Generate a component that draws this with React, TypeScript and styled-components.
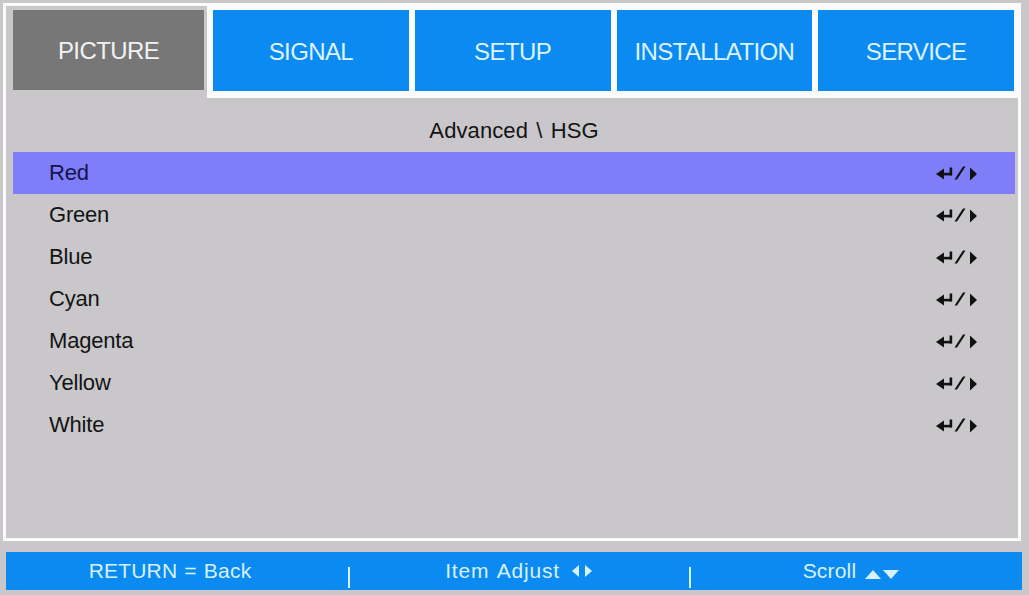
import styled, { createGlobalStyle } from "styled-components";

const GlobalStyle = createGlobalStyle`
    html, body {
        margin: 0;
        padding: 0;
        background: #c9c7ca;
        font-family: "Liberation Sans", Arial, sans-serif;
    }
`;

const Screen = styled.div`
    width: 1029px;
    height: 595px;
    overflow: hidden;
    background: #c9c7ca;
    padding-top: 3px;
    box-sizing: border-box;
`;

const Frame = styled.div`
    margin-left: 3px;
    width: 1018px;
    height: 538px;
    box-sizing: border-box;
    border: 3px solid #fbfbfb;
    background: #c9c7ca;
    display: flex;
    flex-direction: column;
`;

const TabBar = styled.div`
    display: flex;
    height: 92px;
    background: #fbfbfb;
    padding-right: 4px;
`;

const TabCell = styled.div<{ $active?: boolean }>`
    display: flex;
    box-sizing: border-box;
    padding: 4px 0 ${(p) => (p.$active ? "8px" : "7px")} ${(p) => (p.$active ? "7px" : "6px")};
    padding-right: ${(p) => (p.$active ? "3px" : "0")};
    background: ${(p) => (p.$active ? "#c9c7ca" : "transparent")};
    width: ${(p) => (p.$active ? "201px" : "auto")};
    flex: ${(p) => (p.$active ? "none" : "1")};
`;

const TabFace = styled.div<{ $active?: boolean }>`
    flex: 1;
    display: flex;
    align-items: center;
    justify-content: center;
    padding-top: 2px;
    background: ${(p) => (p.$active ? "#777777" : "#0b8bf1")};
    color: ${(p) => (p.$active ? "#f2f2f2" : "#def3ff")};
    font-size: 24px;
    letter-spacing: -0.6px;
`;

const Content = styled.div`
    flex: 1;
    padding: 0 3px 0 7px;
`;

const Crumb = styled.div`
    height: 54px;
    box-sizing: border-box;
    padding-top: 21px;
    text-align: center;
    font-size: 22px;
    line-height: 24px;
    color: #141414;
    letter-spacing: 0.1px;
    word-spacing: 2px;
`;

const Row = styled.div<{ $selected?: boolean }>`
    height: 42px;
    display: flex;
    align-items: center;
    justify-content: space-between;
    padding: 0 37px 0 36px;
    background: ${(p) => (p.$selected ? "#7f7ef8" : "transparent")};
    color: ${(p) => (p.$selected ? "#15154a" : "#141414")};
    font-size: 22px;
    letter-spacing: -0.2px;
`;

const Footer = styled.div`
    margin: 11px 0 0 6px;
    width: 1016px;
    height: 38px;
    background: #0b8bf1;
    color: #d8f1ff;
    display: grid;
    grid-template-columns: 328px 30px 311px 30px 1fr;
    align-items: center;
    font-size: 21px;
    letter-spacing: 0.2px;
`;

const FooterItem = styled.div<{ $shift?: number; $wide?: boolean }>`
    display: flex;
    align-items: center;
    justify-content: center;
    gap: ${(p) => (p.$wide ? 10 : 8)}px;
    word-spacing: ${(p) => (p.$wide ? 2 : 1)}px;
    letter-spacing: ${(p) => (p.$wide ? 0.8 : 0.2)}px;
    padding-right: ${(p) => p.$shift ?? 0}px;
`;

const Divider = styled.div`
    justify-self: center;
    width: 2px;
    height: 21px;
    margin-top: 12px;
    background: #d8f1ff;
`;

// enter hook arrow, slash, right pointer
const EnterOrRight = () => (
    <svg width="42" height="16" viewBox="0 0 42 16">
        <g fill="#111">
            <polygon points="0,9 8,3.5 8,14.5" />
            <rect x="7" y="7.8" width="9" height="2.6" />
            <rect x="13.6" y="2.5" width="2.6" height="7.9" />
            <polygon points="18.5,14.5 27,1.5 29.5,1.5 21,14.5" />
            <polygon points="34,2.5 41,9 34,15.5" />
        </g>
    </svg>
);

const LeftRight = () => (
    <svg width="24" height="16" viewBox="0 0 24 16">
        <g fill="#d8f1ff">
            <polygon points="9,2 2,8 9,14" />
            <polygon points="15,2 22,8 15,14" />
        </g>
    </svg>
);

const UpDown = () => (
    <svg width="36" height="16" viewBox="0 0 36 16" style={{ marginTop: 5 }}>
        <g fill="#d8f1ff">
            <polygon points="1,13 9,4 17,13" />
            <polygon points="19,4 35,4 27,13" />
        </g>
    </svg>
);

const tabs = ["PICTURE", "SIGNAL", "SETUP", "INSTALLATION", "SERVICE"];
const colors = ["Red", "Green", "Blue", "Cyan", "Magenta", "Yellow", "White"];

const App = () => {
    return (
        <Screen>
            <GlobalStyle />
            <Frame>
                <TabBar>
                    {tabs.map((t, i) => (
                        <TabCell key={t} $active={i === 0}>
                            <TabFace $active={i === 0}>{t}</TabFace>
                        </TabCell>
                    ))}
                </TabBar>
                <Content>
                    <Crumb>Advanced \ HSG</Crumb>
                    {colors.map((c, i) => (
                        <Row key={c} $selected={i === 0}>
                            <span>{c}</span>
                            <EnterOrRight />
                        </Row>
                    ))}
                </Content>
            </Frame>
            <Footer>
                <FooterItem>RETURN = Back</FooterItem>
                <Divider />
                <FooterItem $wide>
                    Item Adjust <LeftRight />
                </FooterItem>
                <Divider />
                <FooterItem $shift={24}>
                    Scroll <UpDown />
                </FooterItem>
            </Footer>
        </Screen>
    );
};

export default App;
